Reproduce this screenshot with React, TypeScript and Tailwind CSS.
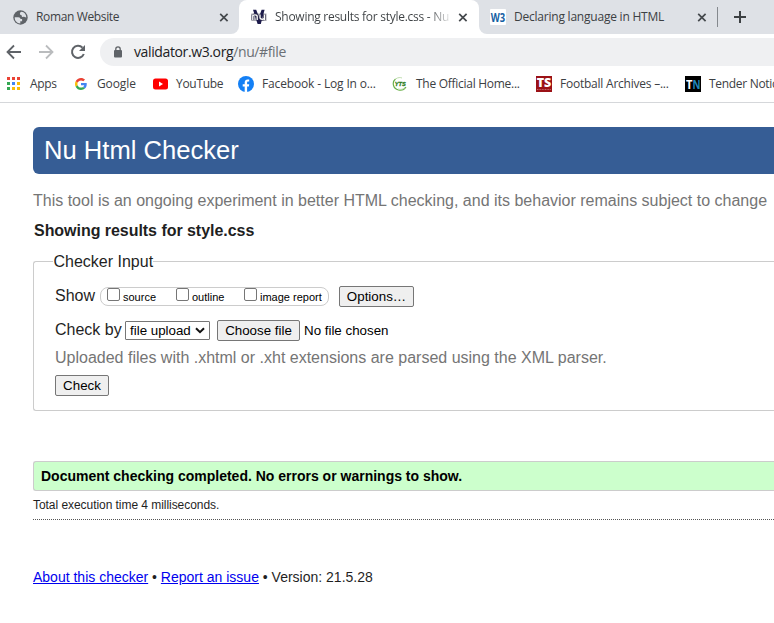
import type { ReactNode } from 'react';

function Close() {
  return (
    <svg width="10" height="9" viewBox="0 0 10 9" className="shrink-0">
      <path d="M1.200.8l7.400 7.400M8.600.8L1.200 8.200" stroke="#45494d" strokeWidth="1.7" />
    </svg>
  );
}

function Globe() {
  return (
    <svg width="15" height="15" viewBox="0 0 15 15" className="shrink-0">
      <circle cx="7.5" cy="7.5" r="7.2" fill="#5f6368" />
      <path d="M1.7 7.3h3.6c1.5 0 2 .8 2.2 1.8h1.6v2.2H7.3v2.1C3.8 13.4 1.6 10.800 1.700 7.300z" fill="#dee1e6" />
      <path d="M8.600 1.800c-1.200.3-1.700 1-1.700 1.900 0 .9.700 1 1.400 1.400.6.400.2 1.500 1.100 1.800.9.300 1.200-.4 2.100 0l1.800.6C13.300 4.400 11.200 2.200 8.600 1.800z" fill="#dee1e6" />
    </svg>
  );
}

function NuLogo() {
  return (
    <svg width="16" height="16" viewBox="0 0 16 16" className="shrink-0">
      <path d="M.3 4.500h15.200v7.500H10L8 14.500 6 12H.3z" fill="#8d8d99" opacity=".75" />
      <path d="M2 .8h3.200L8 8l2.600-7.200h3L9.800 15H6.600z" fill="#1d1b4b" />
      <path d="M1.800 11V5.500M1.800 7.500c0-2.300 4.400-2.300 4.400 0V11M9 5.500v3c0 2.300 4.500 2.300 4.500 0v-3M13.500 5.500V11" stroke="#2a2944" fill="none" strokeWidth="2.400" />
      <path d="M1.800 11V5.500M1.800 7.500c0-2.300 4.400-2.300 4.400 0V11M9 5.500v3c0 2.300 4.500 2.300 4.500 0v-3M13.500 5.500V11" stroke="#fff" fill="none" strokeWidth="1.300" />
    </svg>
  );
}

function Apps() {
  const colors = ['#ea4335', '#ea4335', '#ea4335', '#34a853', '#4285f4', '#fbbc05', '#34a853', '#fbbc05', '#fbbc05'];
  return (
    <svg width="13" height="14" viewBox="0 0 13 14" className="shrink-0">
      {colors.map((c, i) => (
        <rect key={i} x={(i % 3) * 5} y={Math.floor(i / 3) * 5} width="3" height="3" fill={c} />
      ))}
    </svg>
  );
}

function Google() {
  return (
    <svg width="12" height="12" viewBox="0 0 48 48" className="shrink-0">
      <path fill="#EA4335" d="M24 9.500c3.540 0 6.710 1.220 9.210 3.600l6.850-6.850C35.900 2.380 30.470 0 24 0 14.620 0 6.510 5.380 2.560 13.220l7.980 6.190C12.430 13.720 17.740 9.500 24 9.500z" />
      <path fill="#4285F4" d="M46.980 24.550c0-1.570-.15-3.090-.38-4.550H24v9.020h12.940c-.58 2.960-2.260 5.480-4.780 7.180l7.730 6c4.510-4.180 7.090-10.360 7.090-17.650z" />
      <path fill="#FBBC05" d="M10.530 28.590c-.48-1.450-.76-2.990-.76-4.590s.27-3.140.76-4.590l-7.980-6.190C.92 16.460 0 20.120 0 24s.92 7.540 2.560 10.780l7.970-6.190z" />
      <path fill="#34A853" d="M24 48c6.480 0 11.930-2.130 15.890-5.810l-7.730-6c-2.150 1.450-4.920 2.300-8.160 2.300-6.260 0-11.570-4.220-13.470-9.910l-7.980 6.190C6.510 42.620 14.620 48 24 48z" />
    </svg>
  );
}

function YouTube() {
  return (
    <svg width="15" height="12" viewBox="0 0 15 12" className="shrink-0">
      <rect y=".5" width="15" height="11" rx="2.500" fill="#f00" />
      <path d="M6 3.600v4.800L10 6z" fill="#fff" />
    </svg>
  );
}

function Facebook() {
  return (
    <svg width="16" height="16" viewBox="0 0 16 16" className="shrink-0">
      <circle cx="8" cy="8" r="8" fill="#1480f5" />
      <path d="M6.700 16v-5.500h-2V8.200h2V6.500c0-2 1.200-3.100 3-3.100.8 0 1.500.1 1.500.1v2h-.9c-.9 0-1.200.6-1.200 1.200v1.500h2.100l-.3 2.300H9.100V16z" fill="#fff" />
    </svg>
  );
}

function Yts() {
  return (
    <svg width="16" height="16" viewBox="0 0 16 16" className="shrink-0">
      <path d="M3.500 3C-.2 6 .7 12.500 6.500 14c3.500.8 6-.6 7.500-3" fill="none" stroke="#6ab04a" strokeWidth="1.200" />
      <path d="M6 13c3 .9 5.500.2 7-1.500M3.500 3C6 1.300 8.500 1.300 10 2" fill="none" stroke="#b5d8a4" strokeWidth=".9" />
      <text x="2.800" y="9.500" fontFamily="Liberation Sans" fontWeight="bold" fontStyle="italic" fontSize="6" textLength="11" lengthAdjust="spacingAndGlyphs" fill="#2e7d21" stroke="#2e7d21" strokeWidth=".3">YTS</text>
    </svg>
  );
}

function W3Logo() {
  return (
    <svg width="16" height="16" viewBox="0 0 16 16" className="shrink-0 overflow-visible">
      <rect width="16" height="16" rx="1" fill="#fff" />
      <text x=".8" y="12.500" fontFamily="Open Sans" fontWeight="bold" fontSize="13" textLength="14.400" lengthAdjust="spacingAndGlyphs" fill="#1460a3">W3</text>
    </svg>
  );
}

function TsLogo() {
  return (
    <svg width="16" height="16" viewBox="0 0 16 16" className="shrink-0 overflow-visible">
      <rect width="16" height="16" fill="#9b1116" />
      <text x=".7" y="10.800" fontFamily="Open Sans" fontWeight="800" fontSize="12.500" textLength="14.600" lengthAdjust="spacingAndGlyphs" fill="#fff">TS</text>
      <path d="M1 13.500h14" stroke="#c0666a" strokeWidth="1" strokeDasharray="1 .6" />
    </svg>
  );
}

function TnLogo() {
  return (
    <svg width="16" height="16" viewBox="0 0 16 16" className="shrink-0 overflow-visible">
      <rect width="16" height="16" fill="#000" />
      <text x="1" y="12.500" fontFamily="Open Sans" fontWeight="bold" fontSize="12" textLength="6.500" lengthAdjust="spacingAndGlyphs" fill="#fff">T</text>
      <text x="7.500" y="12.500" fontFamily="Open Sans" fontWeight="bold" fontSize="12" textLength="8" lengthAdjust="spacingAndGlyphs" fill="#2187ba">N</text>
    </svg>
  );
}

function Mark({ children, w, className }: { children: ReactNode; w: string; className?: string }) {
  return <span className={`block shrink-0 overflow-visible whitespace-nowrap ${w} ${className ?? ''}`}>{children}</span>;
}

function Browser() {
  return (
    <header className="font-['Open_Sans',sans-serif] text-[12px] text-[#3c4043]">
      <div className="flex h-[34px] bg-white">
        <div className="flex w-[239px] shrink-0 items-center rounded-br-lg bg-[#dee1e6] pl-[13px]">
          <Globe />
          <Mark w="w-[183px]" className="ml-2 tracking-[-0.36px]">Roman Website</Mark>
          <Close />
        </div>
        <div className="flex w-[240px] shrink-0 bg-[#dee1e6]">
          <div className="flex w-full items-center rounded-t-lg bg-white pl-3">
            <NuLogo />
            <div className="ml-2 w-[174px] shrink-0 bg-linear-to-r from-[#3c4043] from-88% to-[#3c4043]/15 bg-clip-text whitespace-nowrap tracking-[-0.27px] text-transparent">
              Showing results for style.css - Nu
            </div>
            <div className="ml-[9px]"><Close /></div>
          </div>
        </div>
        <div className="flex min-w-0 flex-1 items-center rounded-bl-lg bg-[#dee1e6] pl-[11px]">
          <W3Logo />
          <Mark w="w-[183px]" className="ml-2 tracking-[-0.22px]">Declaring language in HTML</Mark>
          <Close />
          <span className="ml-[10px] h-5 w-px shrink-0 bg-[#85898e]" />
          <svg width="12" height="12" viewBox="0 0 12 12" className="ml-4 shrink-0">
            <path d="M6 0v12M0 6h12" stroke="#3c4043" strokeWidth="2" />
          </svg>
        </div>
      </div>
      <div className="flex h-8 items-end">
        <svg width="100" height="28" viewBox="0 0 100 28" fill="none" className="shrink-0">
          <path d="M21 14H8M14 7.500L7.500 14l6.500 6.500" stroke="#5f6368" strokeWidth="1.800" />
          <path d="M39 14h13M46 7.500l6.500 6.500-6.500 6.500" stroke="#babcbe" strokeWidth="1.800" />
          <path d="M82.500 9.600A6.100 6.100 0 1 0 83.800 16" stroke="#5f6368" strokeWidth="2" />
          <path d="M85 7v6h-6z" fill="#5f6368" />
        </svg>
        <div className="flex h-7 flex-1 items-center rounded-l-full bg-[#eff0f2] pl-[14px]">
          <svg width="8" height="12" viewBox="0 0 8 12" className="shrink-0">
            <rect y="4" width="8" height="7.500" rx="1" fill="#5f6368" />
            <path d="M1.800 5V3a2.200 2.200 0 0 1 4.400 0v2" stroke="#5f6368" strokeWidth="1.300" fill="none" />
          </svg>
          <span className="ml-3 pb-px text-[14px] tracking-[-0.38px] text-[#202124]">validator.w3.org<span className="text-[#6b6f74]">/nu/#file</span></span>
        </div>
      </div>
      <div className="flex h-[37px] items-center overflow-hidden border-b border-[#d5d7da] pl-[7px]">
        <Apps />
        <Mark w="w-[45px]" className="ml-[10px] tracking-[-0.3px]">Apps</Mark>
        <Google />
        <Mark w="w-[56px]" className="ml-[10px] tracking-[-0.1px]">Google</Mark>
        <YouTube />
        <Mark w="w-[62px]" className="ml-2 tracking-[-0.3px]">YouTube</Mark>
        <Facebook />
        <Mark w="w-[130px]" className="ml-2 tracking-[-0.15px]">Facebook - Log In o...</Mark>
        <Yts />
        <Mark w="w-[120px]" className="ml-2 tracking-[-0.28px]">The Official Home...</Mark>
        <TsLogo />
        <Mark w="w-[125px]" className="ml-2 tracking-[-0.23px]">Football Archives –...</Mark>
        <TnLogo />
        <Mark w="w-[100px]" className="ml-2 tracking-[-0.3px]">Tender Notices</Mark>
      </div>
    </header>
  );
}

function Button({ children, className }: { children: ReactNode; className: string }) {
  return (
    <button className={`h-[21px] shrink-0 rounded-[2px] border border-[#767676] bg-[#efefef] text-center text-[13.333px] leading-[19px] whitespace-nowrap text-black ${className}`}>
      {children}
    </button>
  );
}

function Check({ label, w }: { label: string; w: string }) {
  return (
    <label className={`flex shrink-0 ${w}`}>
      <span className="size-[13px] shrink-0 rounded-[2px] border border-[#767676] bg-white" />
      <span className="ml-[3px] pt-[3px] text-[11px] leading-[13px] whitespace-nowrap text-black">{label}</span>
    </label>
  );
}

export default function App() {
  return (
    <div className="h-[623px] w-[774px] overflow-hidden bg-white">
      <Browser />
      <main className="pt-6 pl-[33px] font-['Liberation_Sans',Arial,sans-serif] text-[16px] leading-[18px] text-[#1f1f1f]">
        <h1 className="h-[47px] rounded-l-md bg-[#365d95] pl-[11px] text-[25.600px] leading-[46px] text-white">Nu Html Checker</h1>
        <p className="mt-[18px] whitespace-nowrap text-[#757575]">This tool is an ongoing experiment in better HTML checking, and its behavior remains subject to change</p>
        <h2 className="mt-3 pl-px font-bold tracking-[-0.04px]">Showing results for style.css</h2>
        <fieldset className="mt-3 h-[159px] rounded-l-[3px] border border-r-0 border-[#ccc] pl-[21px]">
          <legend className="-ml-[2px] h-[18px] pt-px pl-[0.5px] whitespace-nowrap">Checker Input</legend>
          <div className="mt-4 flex h-[21px]">
            <span className="w-[45px] shrink-0 pt-px">Show</span>
            <div className="mt-px flex h-[19px] w-[229px] shrink-0 rounded-lg border border-[#ccc] pl-[6px]">
              <Check label="source" w="w-[69px]" />
              <Check label="outline" w="w-[68px]" />
              <Check label="image report" w="w-[84px]" />
            </div>
            <Button className="ml-[10px] w-[75px]">Options…</Button>
          </div>
          <div className="mt-[13px] flex h-[21px] text-black">
            <span className="w-[70px] shrink-0 pt-px text-[#1f1f1f]">Check by</span>
            <div className="mt-px flex h-[19px] w-[85px] shrink-0 items-center rounded-[1px] border border-[#767676] pl-1 text-[13.333px]">
              <span className="w-[65px] shrink-0 whitespace-nowrap">file upload</span>
              <svg width="10" height="7" viewBox="0 0 10 7" fill="none" className="shrink-0"><path d="M1 1.200l4 4 4-4" stroke="#111" strokeWidth="2" /></svg>
            </div>
            <Button className="ml-[7px] w-[83px]">Choose file</Button>
            <span className="ml-1 pt-[2px] text-[13.333px] whitespace-nowrap">No file chosen</span>
          </div>
          <p className="mt-2 whitespace-nowrap text-[#757575]">Uploaded files with .xhtml or .xht extensions are parsed using the XML parser.</p>
          <Button className="mt-2 block w-[54px]">Check</Button>
        </fieldset>
        <div className="mt-[50px] h-[30px] rounded-l-[3px] border border-r-0 border-[#ccc] bg-[#cfc] pl-[7px] text-[14px] leading-[28px] font-bold whitespace-nowrap text-black">
          Document checking completed. No errors or warnings to show.
        </div>
        <p className="h-[29px] border-b border-dotted border-[#555] pt-[5px] text-[12px] tracking-[-0.05px]">Total execution time 4 milliseconds.</p>
        <footer className="mt-[48px] text-[14px] whitespace-nowrap">
          <a className="text-[#0000ee] underline">About this checker</a> • <a className="text-[#0000ee] underline">Report an issue</a> • Version: 21.5.28
        </footer>
      </main>
    </div>
  );
}
